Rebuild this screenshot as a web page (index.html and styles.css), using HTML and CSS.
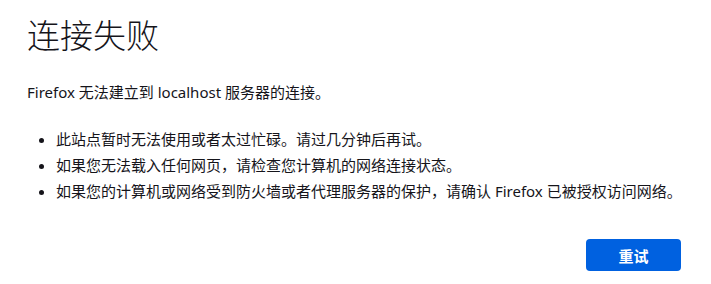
FILE: index.html
```html
<!DOCTYPE html>
<html lang="zh-CN">
<head>
<meta charset="utf-8">
<title>连接失败</title>
<link rel="stylesheet" href="styles.css">
</head>
<body>
<main class="container">
  <h1 class="title">连接失败</h1>
  <p class="desc">Firefox 无法建立到 localhost 服务器的连接。</p>
  <ul class="tips">
    <li>此站点暂时无法使用或者太过忙碌。请过几分钟后再试。</li>
    <li>如果您无法载入任何网页，请检查您计算机的网络连接状态。</li>
    <li>如果您的计算机或网络受到防火墙或者代理服务器的保护，请确认 Firefox 已被授权访问网络。</li>
  </ul>
  <div class="actions">
    <button class="retry" type="button">重试</button>
  </div>
</main>
</body>
</html>
```
FILE: styles.css
```css
html, body {
  margin: 0;
  padding: 0;
  background: #ffffff;
}
body {
  font-family: "Noto Sans", "Noto Sans CJK SC", sans-serif;
  font-size: 15px;
  color: #15141a;
}
.container {
  padding: 14px 0 0 27px;
}
.title {
  margin: 0;
  font-size: 33px;
  line-height: 40px;
  font-weight: 300;
  font-family: "Noto Sans CJK SC", sans-serif;
}
.desc {
  margin: 27px 0 0;
  line-height: 22px;
}
.tips {
  margin: 25px 0 0;
  padding: 0 0 0 29px;
}
.tips li {
  line-height: 22px;
  margin-bottom: 4px;
  white-space: nowrap;
}
.actions {
  display: flex;
  justify-content: flex-end;
  margin-top: 37px;
  padding-right: 30px;
}
.retry {
  width: 95px;
  height: 32px;
  border: none;
  border-radius: 4px;
  background: #0061e0;
  color: #ffffff;
  font-family: "Noto Sans CJK SC", sans-serif;
  font-size: 15px;
  font-weight: 700;
  padding: 0;
}
```
